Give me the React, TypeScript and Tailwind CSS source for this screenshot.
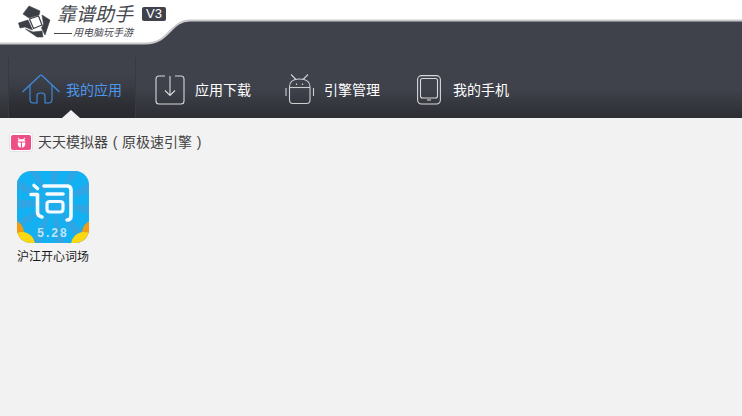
const cjk = "font-['Liberation_Sans','Noto_Sans_CJK_SC',sans-serif]";

function HomeIcon() {
  return (
    <svg width="38" height="30" viewBox="0 0 38 30" fill="none" stroke="#3f8fe8" strokeWidth="1.1">
      <path d="M0.5 18 L18 1.5 Q19 0.5 20 1.5 L37.5 18" strokeLinejoin="round" />
      <path d="M8 11 V25.5 Q8 29 11.5 29 H15 V22 Q15 19 18 19 H20 Q23 19 23 22 V29 H26.5 Q30 29 30 25.5 V11" />
    </svg>
  );
}

function DownloadIcon() {
  return (
    <svg width="30" height="30" viewBox="0 0 30 30" fill="none" stroke="#d8d8da" strokeWidth="1.1">
      <path d="M10 1 H4 Q1 1 1 4 V26 Q1 29 4 29 H26 Q29 29 29 26 V4 Q29 1 26 1 H20" />
      <path d="M15 1 V20.5 M10 15.5 L15 20.5 L20 15.5" />
    </svg>
  );
}

function AndroidIcon() {
  return (
    <svg width="30" height="31" viewBox="0 0 30 31" fill="none" stroke="#cfcfd2" strokeWidth="1.1">
      <path d="M6 0.5 L11 5.5 M23 0.5 L18 5.5" />
      <path d="M4.5 13 Q4.5 5 14.5 5 Q25 5 25 13 V26 Q25 29.5 21.5 29.5 H8 Q4.5 29.5 4.5 26 Z" />
      <path d="M4.5 13.5 H25" />
      <path d="M1 14 V22 M28.5 14 V22" />
      <path d="M11.5 9.5 V11 M17.5 9.5 V11" strokeWidth="1.2" />
    </svg>
  );
}

function PhoneIcon() {
  return (
    <svg width="24" height="30" viewBox="0 0 24 30" fill="none" stroke="#d8d8da" strokeWidth="1.1">
      <rect x="0.6" y="0.6" width="22.8" height="28.4" rx="4" />
      <rect x="3.5" y="3.5" width="17" height="19.5" rx="2" />
      <path d="M10 25 H14" />
    </svg>
  );
}

function LogoMark() {
  return (
    <svg width="33" height="33" viewBox="0 0 33 33" fill="#3d3f46" stroke="#3d3f46" strokeWidth="0.6" strokeLinejoin="round">
      <path d="M11 1 L22 6 L21 10 L11 13 L5 9 Z" />
      <path d="M24 10 L32 15 L27 30 L23.5 23 L25.5 19 Z" />
      <path d="M0.5 18 L10 15 L14.5 25 L7 22 L2 23 Z" />
      <path d="M7.5 24 L15 27 L24 26 L25 32 L19 32 Z" />
      <path d="M11.5 14 L20.5 11 L24 20 L15.5 23.5 Z" fill="#fff" strokeWidth="1.2" />
    </svg>
  );
}

function NavItem({ icon, label, active, w }: { icon: React.ReactNode; label: string; active?: boolean; w: string }) {
  return (
    <div className={`relative flex items-center h-full ${w} ${active ? 'bg-gradient-to-b from-transparent from-30% to-[#2a2b30] border-x border-x-[#393a41]' : ''}`}>
      {icon}
      <span className={`mt-[3px] text-[14px] leading-none ${active ? 'text-[#4b97ee]' : 'text-white'}`}>{label}</span>
      {active && (
        <span className="absolute left-[53px] bottom-0 w-0 h-0 border-x-[9px] border-x-transparent border-b-[8px] border-b-[#f2f2f2]" />
      )}
    </div>
  );
}

export default function App() {
  return (
    <div className={`w-[742px] h-[416px] overflow-hidden bg-[#f2f2f2] ${cjk}`}>
      <header className="relative h-[118px] bg-gradient-to-b from-[#3f424b] from-75% to-[#2d2e34]">
        <svg className="absolute left-0 top-0" width="742" height="46" viewBox="0 0 742 46">
          <path d="M0 0 H742 V20 H190 C170 20 170 44 145 44 H0 Z" fill="#fff" />
          <path d="M742 20.5 H190 C170 20.5 170 43.5 145 43.5 H0" fill="none" stroke="#c9c9cb" strokeWidth="2" />
        </svg>
        <div className="absolute left-[18px] top-[5px] flex">
          <LogoMark />
          <div className="ml-[3px] w-[80px] flex flex-col">
            <span className="ml-[3px] text-[19px] leading-[22px] italic text-[#45474e] -mt-[1px] whitespace-nowrap">靠谱助手</span>
            <span className="flex items-center text-[10px] leading-[12px] italic text-[#45474e] whitespace-nowrap mt-[1px]">
              <span className="w-[18px] h-px bg-[#45474e] mr-[1px]" />
              用电脑玩手游
            </span>
          </div>
          <span className="ml-[8px] mt-[2px] h-[14px] w-[24px] rounded-[2px] bg-[#3f424b] text-white text-[13px] leading-[14px] text-center">V3</span>
        </div>
        <nav className="absolute left-[8px] right-0 top-[58px] bottom-0 flex">
          <NavItem active w="w-[128px] pl-[13px]" label="我的应用" icon={<span className="mr-[6px] mt-[2px] flex"><HomeIcon /></span>} />
          <NavItem w="w-[129px] pl-[19px]" label="应用下载" icon={<span className="mr-[10px] mt-[3px] flex"><DownloadIcon /></span>} />
          <NavItem w="w-[129px] pl-[20px]" label="引擎管理" icon={<span className="mr-[9px] mt-[2px] flex"><AndroidIcon /></span>} />
          <NavItem w="w-[120px] pl-[23px]" label="我的手机" icon={<span className="mr-[12px] mt-[3px] flex"><PhoneIcon /></span>} />
        </nav>
      </header>
      <main className="pt-[14px] pl-[9px]">
        <div className="flex items-center h-[20px]">
          <span className="flex items-center justify-center w-[24px] h-[20px] rounded-[3px] bg-white border border-[#e4e4e4]">
            <span className="flex items-center justify-center w-[20px] h-[15px] rounded-[2px] bg-[#ee4f86]">
              <svg width="11" height="11" viewBox="0 0 10 10" fill="#fff">
                <path d="M2 0.5 L3.5 2 H6.5 L8 0.5 L8.5 1 L7.5 2.5 Q8.5 3 8.5 4 H1.5 Q1.5 3 2.5 2.5 L1.5 1 Z" />
                <path d="M1.5 5 H4.5 V9.5 Q1.5 9.5 1.5 5 Z M5.5 5 H8.5 Q8.5 9.5 5.5 9.5 Z" />
              </svg>
            </span>
          </span>
          <span className="ml-[5px] flex text-[14px] leading-none text-[#444444]">
            天天模拟器
            <span className="w-[14px] text-center">(</span>
            原极速引擎
            <span className="w-[14px] text-center">)</span>
          </span>
        </div>
        <div className="mt-[19px] ml-[8px] w-[72px] flex flex-col items-center">
          <div className="relative w-[72px] h-[72px] rounded-[14px] overflow-hidden bg-[#13b1f1]">
            <svg width="72" height="72" viewBox="0 0 72 72" className="absolute inset-0">
              <g fill="#2fa5e4">
                <path d="M36 32 L0 8 V18 Z M36 32 L0 28 V38 Z M36 32 L0 50 V60 Z M36 32 L14 72 H24 Z M36 32 L38 72 H48 Z M36 32 L62 72 H72 V66 Z M36 32 L72 44 V34 Z M36 32 L72 22 V12 Z M36 32 L62 0 H54 Z M36 32 L42 0 H34 Z M36 32 L20 0 H12 Z" />
              </g>
              <circle cx="-6" cy="62" r="13" fill="#f39a12" />
              <circle cx="78" cy="62" r="13" fill="#f39a12" />
              <circle cx="5" cy="74" r="13" fill="#fdd710" />
              <circle cx="67" cy="74" r="13" fill="#fdd710" />
              <g fill="none" stroke="#f4fbff" strokeWidth="3.6" strokeLinecap="round" strokeLinejoin="round">
                <path d="M17 14.5 L20.5 17.5" />
                <path d="M14 23.5 H20.5 V41 Q20.5 45 25 46" />
                <path d="M27 15 H50 Q54 15 54 19 V45 Q54 49 50 49" />
                <path d="M30 23 H46" />
                <path d="M33 30.5 H43 Q46 30.5 46 33 V38 Q46 41 43 41 H33 Q30 41 30 38 V33 Q30 30.5 33 30.5 Z" strokeWidth="3.2" />
              </g>
            </svg>
            <span className="absolute left-0 right-0 bottom-[4px] text-center text-[12px] leading-[12px] tracking-[2px] font-bold text-[#bfe6fa]">5.28</span>
          </div>
          <span className="mt-[7px] text-[12px] leading-[14px] text-[#1a1a1a] whitespace-nowrap">沪江开心词场</span>
        </div>
      </main>
    </div>
  );
}
